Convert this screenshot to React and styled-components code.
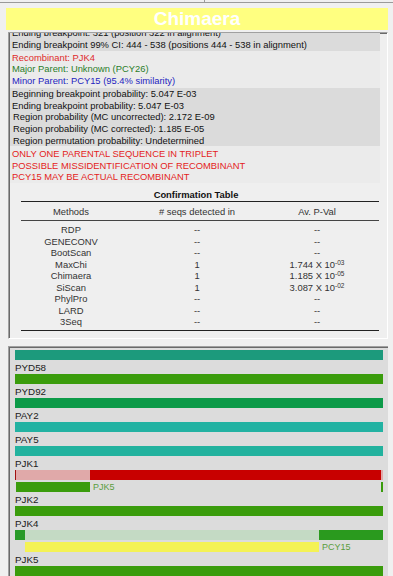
import React from "react"
import styled, { createGlobalStyle } from "styled-components"

const GlobalStyle = createGlobalStyle`
  html, body { margin: 0; padding: 0; background: #f0f0f0; }
  body { font-family: "Liberation Sans", Arial, sans-serif; overflow: hidden; }
`

const Page = styled.div`
  width: 393px;
  height: 576px;
  overflow: hidden;
  background: #f0f0f0;
  display: flex;
  flex-direction: column;
`

const TopStrip = styled.div`
  height: 2px;
  display: flex;
  border-bottom: 1px solid #9a9a9a;
`

const TopCell = styled.div`
  width: ${p => p.$w};
  border-right: ${p => (p.$divider ? "1px solid #9a9a9a" : "none")};
`

const Title = styled.div`
  margin: 5px 5px 0 6px;
  height: 22px;
  background: #ffff80;
  color: #fff;
  font-weight: bold;
  font-size: 19px;
  line-height: 22px;
  text-align: center;
`

const InfoPanel = styled.div`
  margin: 2px 5px 0 8px;
  height: 309px;
  box-sizing: border-box;
  overflow: hidden;
  background: #efefef;
  border: 1px solid;
  border-color: #a0a0a0 #ffffff #ffffff #a0a0a0;
  box-shadow: inset 1px 1px 0 #6a6a6a;
  padding-left: 1px;
`

const Scroller = styled.div`
  margin-top: -5.7px;
`

const Block = styled.div`
  width: 370px;
  background: ${p => (p.$dark ? "#dbdbdb" : "#ebebeb")};
  padding: ${p => p.$pad || "0"};
`

const Line = styled.div`
  font-size: 9.4px;
  line-height: ${p => p.$lh || "11.7px"};
  height: ${p => p.$lh || "11.7px"};
  padding-left: ${p => (p.$indent ? "3px" : "2px")};
  color: ${p => p.$color || "#111"};
  white-space: nowrap;
`

const ConfTable = styled.div`
  margin: 5.6px 0 0 11px;
  width: 358px;
  font-size: 9.4px;
  color: #333;
`

const Caption = styled.div`
  font-weight: bold;
  color: #111;
  text-align: center;
  padding-right: 8px;
  line-height: 12px;
  border-bottom: 1px solid #222;
`

const Grid = styled.div`
  display: grid;
  grid-template-columns: 100px 152px 88px 1fr;
  text-align: center;
`

const HeadRow = styled(Grid)`
  padding-top: 1px;
  line-height: 17px;
  border-bottom: 1px solid #444;
`

const Body = styled.div`
  padding: 3.5px 0 2px;
  border-bottom: 1px solid #222;
`

const BodyRow = styled(Grid)`
  line-height: 11.5px;
  height: 11.5px;
`

const Sup = styled.sup`
  font-size: 6.5px;
  vertical-align: 3px;
  line-height: 0;
`

const BarPanel = styled.div`
  margin: 7px 5px 0 8px;
  flex: 1;
  background: #dcdcdc;
  border-top: 1px solid #a0a0a0;
  border-left: 1px solid #a0a0a0;
  box-shadow: inset 1px 1px 0 #6a6a6a;
  padding: 3px 0 0 6px;
`

const SeqLabel = styled.div`
  font-size: 9.8px;
  color: #1a1a1a;
  padding-top: 2px;
  line-height: 12px;
  height: 12px;
`

const Track = styled.div`
  display: flex;
  align-items: center;
  width: 368px;
  height: 10px;
  margin-top: ${p => (p.$sub ? "2px" : "0")};
`

const Seg = styled.div`
  height: 10px;
  flex: none;
`

const Spacer = styled.div`
  flex: 1;
`

const Tag = styled.span`
  margin-left: 3px;
  font-size: 9px;
  line-height: 10px;
  color: #5a9c3c;
`

const info = [
  { dark: true, lines: [
    { t: "Ending breakpoint: 321 (position 322 in alignment)" },
    { t: "Ending breakpoint 99% CI: 444 - 538 (positions 444 - 538 in alignment)" },
  ] },
  { dark: false, pad: "0.9px 0 1.3px", lines: [
    { t: "Recombinant: PJK4", c: "#e02a2a" },
    { t: "Major Parent: Unknown (PCY26)", c: "#2a7d2a" },
    { t: "Minor Parent: PCY15 (95.4% similarity)", c: "#2424c0" },
  ] },
  { dark: true, lines: [
    { t: "Beginning breakpoint probability: 5.047 E-03" },
    { t: "Ending breakpoint probability:  5.047 E-03" },
    { t: "Region probability (MC uncorrected): 2.172 E-09", i: true },
    { t: "Region probability (MC corrected): 1.185 E-05", i: true },
    { t: "Region permutation probability: Undetermined", i: true },
  ] },
  { dark: false, pad: "1.5px 0 0", lh: "11.8px", lines: [
    { t: "ONLY ONE PARENTAL SEQUENCE IN TRIPLET", c: "#e41c1c" },
    { t: "POSSIBLE MISSIDENTIFICATION OF RECOMBINANT", c: "#e41c1c" },
    { t: "PCY15 MAY BE ACTUAL RECOMBINANT", c: "#e41c1c" },
  ] },
]

const methods = [
  ["RDP", "--", null],
  ["GENECONV", "--", null],
  ["BootScan", "--", null],
  ["MaxChi", "1", ["1.744", "-03"]],
  ["Chimaera", "1", ["1.185", "-05"]],
  ["SiScan", "1", ["3.087", "-02"]],
  ["PhylPro", "--", null],
  ["LARD", "--", null],
  ["3Seq", "--", null],
]

const GREEN = "#3a9c0c"

const seqs = [
  { label: null, bars: [[{ w: 368, c: "#1c9a7c" }]] },
  { label: "PYD58", bars: [[{ w: 368, c: GREEN }]] },
  { label: "PYD92", bars: [[{ w: 368, c: "#0c9a48" }]] },
  { label: "PAY2", bars: [[{ w: 368, c: "#22b2a2" }]] },
  { label: "PAY5", bars: [[{ w: 368, c: "#22b29e" }]] },
  { label: "PJK1", bars: [
    [{ w: 1, c: "#a01010" }, { w: 74, c: "#e0a9a9" }, { w: 291, c: "#c80000" }, { w: 2, c: "#e0a9a9" }],
    [{ w: 1 }, { w: 74, c: GREEN }, { tag: "PJK5" }, { spacer: true }, { w: 1.5, c: GREEN }, { w: 0.5 }],
  ] },
  { label: "PJK2", bars: [[{ w: 368, c: GREEN }]] },
  { label: "PJK4", bars: [
    [{ w: 10, c: "#289a28" }, { w: 294, c: "#c4dac4" }, { w: 64, c: "#2a9a1e" }],
    [{ w: 10 }, { w: 294, c: "#f4f255" }, { tag: "PCY15" }],
  ] },
  { label: "PJK5", bars: [[{ w: 368, c: GREEN }]] },
]

const Bar = ({ parts, sub }) => (
  <Track $sub={sub}>
    {parts.map((p, i) => {
      if (p.tag) return <Tag key={i}>{p.tag}</Tag>
      if (p.spacer) return <Spacer key={i} />
      return <Seg key={i} style={{ width: p.w, background: p.c || "transparent" }} />
    })}
  </Track>
)

export default function App() {
  return (
    <Page>
      <GlobalStyle />
      <TopStrip>
        <TopCell $w="205px" $divider />
        <TopCell $w="188px" />
      </TopStrip>
      <Title>Chimaera</Title>

      <InfoPanel>
        <Scroller>
          {info.map((b, i) => (
            <Block key={i} $dark={b.dark} $pad={b.pad}>
              {b.lines.map((l, j) => (
                <Line key={j} $color={l.c} $indent={l.i} $lh={b.lh}>{l.t}</Line>
              ))}
            </Block>
          ))}
          <ConfTable>
            <Caption>Confirmation Table</Caption>
            <HeadRow>
              <div>Methods</div>
              <div># seqs detected in</div>
              <div>Av. P-Val</div>
              <div />
            </HeadRow>
            <Body>
              {methods.map(([m, n, p]) => (
                <BodyRow key={m}>
                  <div>{m}</div>
                  <div>{n}</div>
                  <div>{p ? <>{p[0]} X 10<Sup>{p[1]}</Sup></> : "--"}</div>
                  <div />
                </BodyRow>
              ))}
            </Body>
          </ConfTable>
        </Scroller>
      </InfoPanel>

      <BarPanel>
        {seqs.map((s, i) => (
          <div key={i}>
            {s.label && <SeqLabel>{s.label}</SeqLabel>}
            {s.bars.map((parts, j) => (
              <Bar key={j} parts={parts} sub={j > 0} />
            ))}
          </div>
        ))}
      </BarPanel>
    </Page>
  )
}
